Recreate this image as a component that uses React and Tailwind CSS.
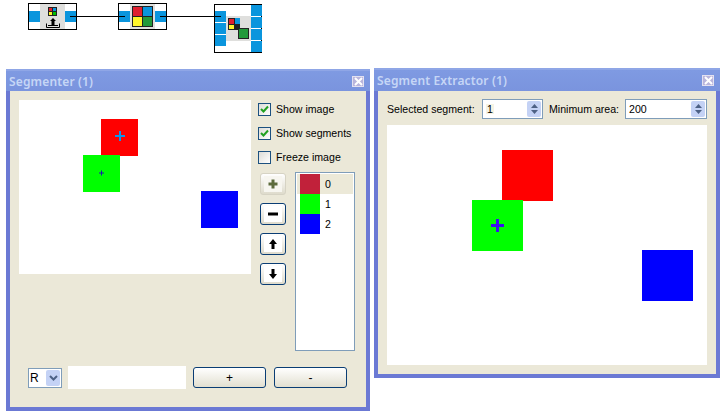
import React from "react";

const UI_FONT = "font-['Liberation_Sans',sans-serif]";

const Diagram = () => (
  <svg width="724" height="68" viewBox="0 0 724 68" className="block">
    <path d="M70 16.500H125M160 16.500H221" stroke="#000" strokeWidth="1" fill="none" />
    {/* source node */}
    <rect x="28.500" y="3.500" width="48" height="26" fill="#fff" stroke="#000" />
    <rect x="40" y="4" width="25" height="25" fill="#dfdfdd" />
    <rect x="29" y="11" width="11" height="11" fill="#0a95dd" />
    <rect x="65" y="11" width="11" height="11" fill="#0a95dd" />
    <path d="M70 16.500H76" stroke="#000" />
    <rect x="48" y="7" width="9" height="9" fill="#222" />
    <rect x="49" y="8" width="3" height="3" fill="#e0202f" />
    <rect x="53" y="8" width="3" height="3" fill="#0a95dd" />
    <rect x="49" y="12" width="3" height="3" fill="#fff52a" />
    <rect x="53" y="12" width="3" height="3" fill="#00c000" />
    <path d="M46.500 23.500V27.500H59.500V23.500" stroke="#000" fill="none" />
    <path d="M53 18L56 21H54.500V25.500H51.500V21H50Z" fill="#000" />
    <path d="M48 25.500H58" stroke="#000" />
    {/* segmenter node */}
    <rect x="118.500" y="3.500" width="48" height="26" fill="#fff" stroke="#000" />
    <rect x="130" y="4" width="25" height="25" fill="#dfdfdd" />
    <rect x="119" y="11" width="11" height="11" fill="#0a95dd" />
    <rect x="155" y="11" width="11" height="11" fill="#0a95dd" />
    <path d="M119 16.500H125M160 16.500H166" stroke="#000" />
    <rect x="132" y="6" width="21" height="21" fill="#222" />
    <rect x="133" y="7" width="9" height="9" fill="#e0202f" />
    <rect x="143" y="7" width="9" height="9" fill="#0a95dd" />
    <rect x="133" y="17" width="9" height="9" fill="#fff52a" />
    <rect x="143" y="17" width="9" height="9" fill="#22993a" />
    {/* extractor node */}
    <rect x="214.500" y="4.500" width="47" height="48" fill="#fff" stroke="#000" />
    <rect x="226" y="16" width="25" height="25" fill="#dfdfdd" />
    <rect x="215" y="11" width="11" height="11" fill="#0a95dd" />
    <rect x="215" y="23" width="11" height="11" fill="#0a95dd" />
    <rect x="215" y="35" width="11" height="11" fill="#0a95dd" />
    <rect x="251" y="5" width="11" height="11" fill="#0a95dd" />
    <rect x="251" y="17" width="11" height="11" fill="#0a95dd" />
    <rect x="251" y="29" width="11" height="11" fill="#0a95dd" />
    <rect x="251" y="41" width="11" height="11" fill="#0a95dd" />
    <path d="M215 16.500H221" stroke="#000" />
    <rect x="228" y="18" width="12" height="12" fill="#222" />
    <rect x="229" y="19" width="5" height="5" fill="#e0202f" />
    <rect x="235" y="18" width="5" height="6" fill="#0a95dd" />
    <rect x="229" y="25" width="5" height="4" fill="#fff52a" />
    <rect x="238" y="28" width="11" height="11" fill="#222" />
    <rect x="239" y="29" width="9" height="9" fill="#22993a" />
  </svg>
);

const Window = ({ title, titleHeight, className, children }) => (
  <div className={`flex flex-col border-x-4 border-b-4 border-x-[#6b79d4] border-b-[#6b79d4] shadow-[inset_0_-1px_0_#8b9ae4] ${className}`}>
    <div className={`-mx-1 ${titleHeight} flex items-center justify-between pl-[3px] pr-[6px] border-t-2 border-t-[#8fa6e6] bg-gradient-to-b from-[#7f9ae2] to-[#7a94de]`}>
      <span className="pt-px text-[12px] tracking-[0.15px] font-semibold whitespace-nowrap text-[#c6d6f6] font-['Noto_Sans',sans-serif]">{title}</span>
      <span className="w-3 h-[11px] flex items-center justify-center bg-[#b9b5dc] border border-[#e3e1f0]">
        <svg width="9" height="9" viewBox="0 0 9 9">
          <path d="M1 1L8 8M8 1L1 8" stroke="#fff" strokeWidth="2" />
        </svg>
      </span>
    </div>
    <div className="flex-1 bg-[#ebe8d8]">{children}</div>
  </div>
);

const Checkbox = ({ label, checked }) => (
  <div className="flex items-center gap-[5px] h-[13px] whitespace-nowrap">
    <span className="w-[13px] h-[13px] border border-[#1c5180] bg-gradient-to-br from-[#dcdcd7] to-white flex items-center justify-center">
      {checked && (
        <svg width="9" height="9" viewBox="0 0 9 9">
          <path d="M1 4L3.500 6.500L8 1.500" stroke="#21a121" strokeWidth="2" fill="none" />
        </svg>
      )}
    </span>
    <span>{label}</span>
  </div>
);

const ToolButton = ({ disabled, children }) => (
  <div className={`w-[26px] h-[22px] rounded-[3px] flex items-center justify-center bg-gradient-to-b from-white to-[#dedbcc] ${disabled ? "border border-[#d6d3c4]" : "border border-[#0a3d74]"}`}>
    <svg width="18" height="16" viewBox="-2 -1 18 16" className={disabled ? "bg-[#f7f6f0]" : "bg-white"}>
      {children}
    </svg>
  </div>
);

const WideButton = ({ children }) => (
  <div className="w-[73px] h-[21px] rounded-[3px] border border-[#0a3d74] bg-gradient-to-b from-white to-[#e2dfd0] flex items-center justify-center text-[12px] text-black">
    {children}
  </div>
);

const SegmentRow = ({ color, label, selected }) => (
  <div className={`h-5 flex items-center pl-[3px] gap-[5px] ${selected ? "bg-[#ece9d8]" : ""}`}>
    <span className={`w-5 h-5 ${color}`} />
    <span>{label}</span>
  </div>
);

const Spin = ({ value, valueClass, className }) => (
  <div className={`h-5 border border-[#7f9db9] bg-white flex items-center justify-between pl-[3px] pr-[1px] ${className}`}>
    <span className={valueClass}>{value}</span>
    <div className="w-[14px] h-4 rounded-[2px] bg-[#c4d2f5] flex flex-col items-center justify-center gap-[2px]">
      <svg width="7" height="4" viewBox="0 0 7 4"><path d="M3.500 0L7 4H0Z" fill="#4d6185" /></svg>
      <svg width="7" height="4" viewBox="0 0 7 4"><path d="M0 0H7L3.500 4Z" fill="#4d6185" /></svg>
    </div>
  </div>
);

export default function App() {
  return (
    <div className={`w-[724px] h-[414px] bg-white overflow-hidden text-[10.6px] leading-none text-black ${UI_FONT}`}>
      <Diagram />
      <div className="flex items-start gap-1 pl-[6px]">
        <Window title="Segmenter (1)" titleHeight="h-[22px]" className="w-[364px] h-[342px] mt-px">
          <div className="pl-[9px] pt-[9px] flex">
            <svg width="232" height="174" viewBox="0 0 232 174" className="block bg-white shrink-0">
              <rect x="82" y="19" width="37" height="37" fill="#f00" />
              <rect x="64" y="55" width="37" height="37" fill="#0f0" />
              <rect x="182" y="91" width="37" height="37" fill="#00f" />
              <path d="M101 31V41M96 36H106" stroke="#0a95ee" strokeWidth="2" />
              <path d="M82.500 70.500V75.500M80 73H85" stroke="#1a1ab0" strokeWidth="1" />
            </svg>
            <div className="ml-[7px] flex flex-col">
              <div className="flex flex-col gap-[11px] pt-[3px]">
                <Checkbox label="Show image" checked />
                <Checkbox label="Show segments" checked />
                <Checkbox label="Freeze image" />
              </div>
              <div className="flex mt-[8px]">
                <div className="ml-[2px] mt-px flex flex-col gap-2">
                  <ToolButton disabled>
                    <path d="M7 2.500V11.500M2.500 7H11.500" stroke="#5d6b3c" strokeWidth="3" />
                  </ToolButton>
                  <ToolButton>
                    <path d="M2 7H12" stroke="#000" strokeWidth="3" />
                  </ToolButton>
                  <ToolButton>
                    <path d="M7 2L11 7H8.500V12H5.500V7H3Z" fill="#000" />
                  </ToolButton>
                  <ToolButton>
                    <path d="M7 12L11 7H8.500V2H5.500V7H3Z" fill="#000" />
                  </ToolButton>
                </div>
                <div className="ml-[9px] w-[60px] h-[179px] border border-[#7f9db9] bg-white p-px">
                  <SegmentRow color="bg-[#c1213a]" label="0" selected />
                  <SegmentRow color="bg-[#00ff00]" label="1" />
                  <SegmentRow color="bg-[#0000ff]" label="2" />
                </div>
              </div>
            </div>
          </div>
          <div className="flex items-center pl-[18px] mt-[15px]">
            <div className="w-[34px] h-5 border border-[#7f9db9] bg-white flex items-center justify-between pl-[1px] pr-[1px]">
              <span className="text-[12px]">R</span>
              <div className="w-[14px] h-4 rounded-[2px] bg-[#c4d2f5] flex items-center justify-center">
                <svg width="9" height="6" viewBox="0 0 9 6"><path d="M1 1L4.500 4.500L8 1" stroke="#4d6185" strokeWidth="2" fill="none" /></svg>
              </div>
            </div>
            <div className="ml-[6px] w-[118px] h-[23px] bg-white" />
            <div className="ml-[7px] flex gap-2">
              <WideButton>+</WideButton>
              <WideButton>-</WideButton>
            </div>
          </div>
        </Window>
        <Window title="Segment Extractor (1)" titleHeight="h-[23px]" className="w-[346px] h-[310px]">
          <div className="px-[9px] pt-2">
            <div className="flex items-center h-5 whitespace-nowrap">
              <span className="w-[88px]">Selected segment:</span>
              <Spin value="1" valueClass="bg-[#f6f3e3] px-px" className="w-[61px] ml-[7px] shrink-0" />
              <span className="ml-[6px] w-[69px]">Minimum area:</span>
              <Spin value="200" className="w-[82px] ml-[7px] shrink-0" />
            </div>
            <svg width="320" height="240" viewBox="0 0 320 240" className="block bg-white mt-[6px]">
              <rect x="115" y="25" width="51" height="51" fill="#f00" />
              <rect x="85" y="75" width="51" height="51" fill="#0f0" />
              <rect x="255" y="125" width="51" height="51" fill="#00f" />
              <path d="M110.500 94V107M104 100.500H117" stroke="#3a10f0" strokeWidth="3" />
            </svg>
          </div>
        </Window>
      </div>
    </div>
  );
}
